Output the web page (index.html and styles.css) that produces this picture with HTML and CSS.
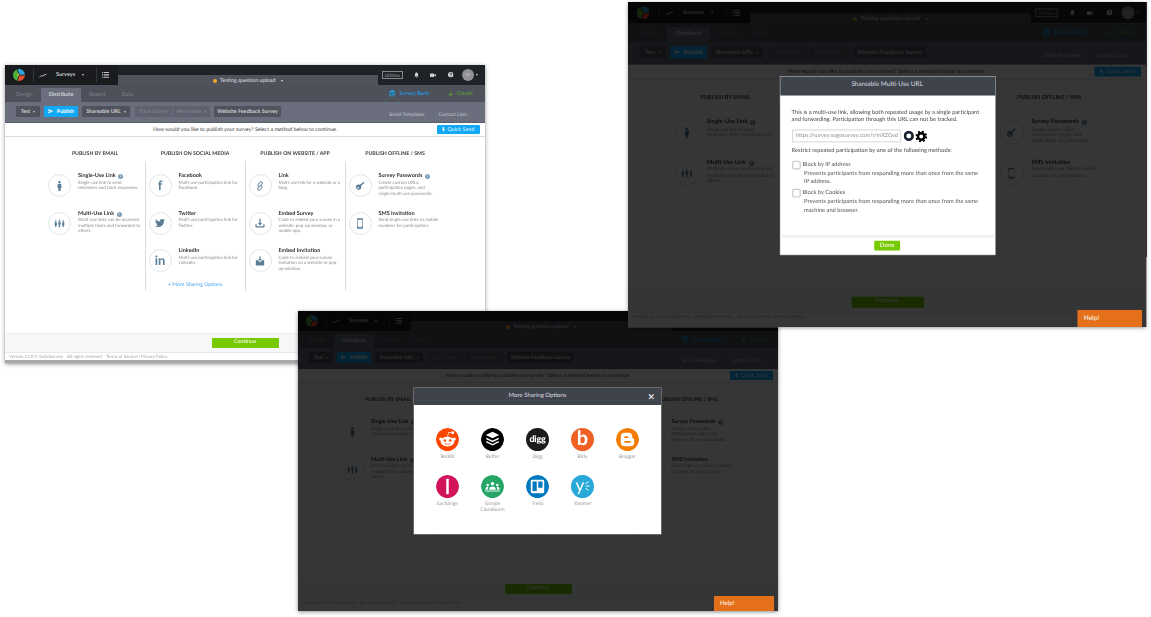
FILE: index.html
```html
<!DOCTYPE html>
<html lang="en">
<head>
<meta charset="utf-8">
<title>SoGoSurvey distribution screens</title>
<link rel="stylesheet" href="styles.css">
</head>
<body>
<svg class="sprite" xmlns="http://www.w3.org/2000/svg">
  <symbol id="i-logo" viewBox="0 0 24 24"><path fill="#2ea4d8" d="M9 .4A12 12 0 0 1 24 11.5H13z"/><path fill="#e8502f" d="M24 13A12 12 0 0 1 9.500 23.700L13 13z"/><path fill="#4fae3c" d="M7.500 1A12 12 0 0 0 8 23.300L11.500 12z"/><path fill="#f4c531" d="M9.500 7l2.500 5-2.800 4.500z"/></symbol>
  <symbol id="i-trend" viewBox="0 0 24 16"><path fill="none" stroke="currentColor" stroke-width="2.200" d="M1 14l6-7 5 4 5-7 2 3 4-5"/></symbol>
  <symbol id="i-list" viewBox="0 0 16 14"><path fill="currentColor" d="M0 0h2.500v2.500H0zM4 0h12v2.500H4zM0 5.500h2.500V8H0zM4 5.500h12V8H4zM0 11h2.500v2.500H0zM4 11h12v2.500H4z"/></symbol>
  <symbol id="i-bell" viewBox="0 0 16 18"><path fill="currentColor" d="M8 0a1.500 1.500 0 0 1 1.500 1.700C12 2.400 13 4.500 13 7v4l2 3H1l2-3V7c0-2.500 1-4.600 3.500-5.300A1.500 1.500 0 0 1 8 0zM6 15h4a2 2 0 0 1-4 0z"/></symbol>
  <symbol id="i-video" viewBox="0 0 20 14"><path fill="currentColor" d="M0 2.500A1.500 1.500 0 0 1 1.500 1h11A1.500 1.500 0 0 1 14 2.500v9a1.500 1.500 0 0 1-1.500 1.500h-11A1.500 1.500 0 0 1 0 11.500zM15 5.500l5-3v9l-5-3z"/></symbol>
  <symbol id="i-help" viewBox="0 0 16 16"><path fill="currentColor" fill-rule="evenodd" d="M8 0a8 8 0 1 1 0 16A8 8 0 0 1 8 0zM7 11v2h2v-2zM8 3C6 3 5 4.200 5 6h2c0-.7.300-1 1-1s1 .3 1 .9c0 1.100-2 1.300-2 3.600h2c0-1.700 2-2 2-3.800C11 4.200 9.800 3 8 3z"/></symbol>
  <symbol id="i-bank" viewBox="0 0 20 20"><path fill="currentColor" d="M10 0l10 5v2H0V5zM2 8.500h3v7H2zM8.500 8.500h3v7h-3zM15 8.500h3v7h-3zM0 17h20v3H0z"/></symbol>
  <symbol id="i-plane" viewBox="0 0 20 16"><path fill="currentColor" d="M0 0l20 8-20 8 3-7h9V7H3z"/></symbol>
  <symbol id="i-bolt" viewBox="0 0 10 16"><path fill="currentColor" d="M3 0h4v7h3l-5 9-2-6H1z"/></symbol>
  <symbol id="i-person" viewBox="0 0 12 24"><path fill="currentColor" d="M6 0a3 3 0 1 1 0 6 3 3 0 0 1 0-6zM2 7h8l1 9H9l-.5 8h-5L3 16H1z"/></symbol>
  <symbol id="i-people" viewBox="0 0 28 20"><path fill="currentColor" d="M4.500 2a2 2 0 1 1 0 4 2 2 0 0 1 0-4zM2 7h5l.8 6H6.500L6 19H3l-.500-6H1.200zM14 0a2 2 0 1 1 0 4 2 2 0 0 1 0-4zM11.500 5h5l.8 7H16l-.5 8h-3l-.5-8h-1.300zM23.500 2a2 2 0 1 1 0 4 2 2 0 0 1 0-4zM21 7h5l.8 6h-1.300L25 19h-3l-.500-6h-1.300z"/></symbol>
  <symbol id="i-twitter" viewBox="0 0 24 24"><path fill="currentColor" d="M23.953 4.570a10 10 0 0 1-2.825.775 4.958 4.958 0 0 0 2.163-2.723c-.951.555-2.005.959-3.127 1.184a4.920 4.920 0 0 0-8.384 4.482C7.690 8.095 4.067 6.130 1.640 3.162a4.822 4.822 0 0 0-.666 2.475c0 1.710.870 3.213 2.188 4.096a4.904 4.904 0 0 1-2.228-.616v.060a4.923 4.923 0 0 0 3.946 4.827 4.996 4.996 0 0 1-2.212.085 4.936 4.936 0 0 0 4.604 3.417 9.867 9.867 0 0 1-6.102 2.105c-.390 0-.779-.023-1.170-.067a13.995 13.995 0 0 0 7.557 2.209c9.053 0 13.998-7.496 13.998-13.985 0-.210 0-.420-.015-.630A9.935 9.935 0 0 0 24 4.590z"/></symbol>
  <symbol id="i-link" viewBox="0 0 24 24"><g fill="none" stroke="currentColor" stroke-width="2.200"><rect x="9" y="1" width="7" height="13" rx="3.500" transform="rotate(40 12.500 7.500)"/><rect x="8" y="10" width="7" height="13" rx="3.500" transform="rotate(40 11.500 16.500)"/></g></symbol>
  <symbol id="i-download" viewBox="0 0 24 24"><path fill="currentColor" d="M10.500 2h3v10h4L12 18l-5.500-6h4zM1 15h3v4c0 .6.400 1 1 1h14c.6 0 1-.4 1-1v-4h3v5c0 1.700-1.300 3-3 3H4c-1.700 0-3-1.300-3-3z"/></symbol>
  <symbol id="i-invite" viewBox="0 0 24 24"><path fill="currentColor" d="M10.500 1h3v6h3L12 12 7.500 7h3zM2 10h5l5 5 5-5h5v13H2z"/></symbol>
  <symbol id="i-key" viewBox="0 0 24 24"><path fill="currentColor" fill-rule="evenodd" d="M21 2l1.500 2-8 8a6.500 6.500 0 1 1-3-3zM7.500 14.500a2 2 0 1 0 0 4 2 2 0 0 0 0-4z"/></symbol>
  <symbol id="i-phone" viewBox="0 0 14 24"><path fill="currentColor" fill-rule="evenodd" d="M2 0h10a2 2 0 0 1 2 2v20a2 2 0 0 1-2 2H2a2 2 0 0 1-2-2V2a2 2 0 0 1 2-2zM1.500 3.500v16h11v-16zM6 21v1.500h2V21z"/></symbol>
  <symbol id="i-reddit" viewBox="0 0 24 24"><circle cx="12" cy="12" r="12" fill="#ff4500"/><ellipse cx="12" cy="14.200" rx="7.200" ry="5" fill="#fff"/><circle cx="5" cy="11.500" r="1.700" fill="#fff"/><circle cx="19" cy="11.500" r="1.700" fill="#fff"/><circle cx="17.500" cy="5" r="1.500" fill="#fff"/><path fill="none" stroke="#fff" stroke-width=".8" d="M12 9.500l1.200-5 4 .8"/><circle cx="9.200" cy="13" r="1.300" fill="#ff4500"/><circle cx="14.800" cy="13" r="1.300" fill="#ff4500"/><path fill="none" stroke="#ff4500" stroke-width=".8" d="M9 16.200c1.800 1.200 4.200 1.200 6 0"/></symbol>
  <symbol id="i-buffer" viewBox="0 0 24 24"><circle cx="12" cy="12" r="12" fill="#000"/><path fill="#fff" d="M12 4l7 3.300-7 3.300-7-3.300z"/><path fill="none" stroke="#fff" stroke-width="1.500" d="M5.500 10.800L12 14l6.500-3.200M5.500 14.300L12 17.500l6.500-3.200"/></symbol>
  <symbol id="i-blogger" viewBox="0 0 24 24"><circle cx="12" cy="12" r="12" fill="#f57d00"/><path fill="#fff" fill-rule="evenodd" d="M9 5h4a4 4 0 0 1 4 4v1a1 1 0 0 0 1 1 1 1 0 0 1 1 1v3a4 4 0 0 1-4 4H9a4 4 0 0 1-4-4V9a4 4 0 0 1 4-4zM9.500 8.500a1 1 0 0 0 0 2h2.500a1 1 0 0 0 0-2zM9.500 13.500a1 1 0 0 0 0 2h5a1 1 0 0 0 0-2z"/></symbol>
  <symbol id="i-exchange" viewBox="0 0 24 24"><circle cx="12" cy="12" r="12" fill="#d1145a"/><rect x="10.700" y="4" width="2.600" height="16" rx=".5" fill="#fff"/></symbol>
  <symbol id="i-classroom" viewBox="0 0 24 24"><circle cx="12" cy="12" r="12" fill="#25a667"/><g fill="#fff"><circle cx="12" cy="9" r="1.800"/><circle cx="7" cy="10.500" r="1.300"/><circle cx="17" cy="10.500" r="1.300"/><path d="M8.500 15.500c0-2.300 1.500-3.500 3.500-3.500s3.500 1.200 3.500 3.500zM4.500 15.500c0-2 1-3.200 2.500-3.200l.8.300c-.5.900-.8 1.800-.9 2.900zM19.500 15.500c0-2-1-3.200-2.500-3.200l-.8.300c.5.900.8 1.800.9 2.900z"/><rect x="4.500" y="16.300" width="15" height=".9"/></g></symbol>
  <symbol id="i-trello" viewBox="0 0 24 24"><circle cx="12" cy="12" r="12" fill="#0079bf"/><rect x="5" y="5" width="14" height="14" rx="1.500" fill="#fff"/><rect x="6.800" y="6.800" width="4.400" height="10" fill="#0079bf"/><rect x="12.800" y="6.800" width="4.400" height="6.500" fill="#0079bf"/></symbol>
  <symbol id="i-sparks" viewBox="0 0 6 12"><path fill="none" stroke="#fff" stroke-width="1.200" stroke-linecap="round" d="M1 3L4 1M1.500 6H5M1 9l3 2"/></symbol>
  <symbol id="i-ring" viewBox="0 0 24 24"><circle cx="12" cy="12" r="8.500" fill="none" stroke="#15212e" stroke-width="6"/></symbol>
  <symbol id="i-gear" viewBox="0 0 24 24"><circle cx="12" cy="12" r="6.500" fill="none" stroke="#000" stroke-width="5"/><circle cx="12" cy="12" r="10" fill="none" stroke="#000" stroke-width="4" stroke-dasharray="4 3.850"/></symbol>
</svg>

<main class="desk">

  <!-- Window 1: the plain Distribute page -->
  <section class="window window--plain">
    <header class="topbar">
      <div class="topbar__left">
        <svg class="logo"><use href="#i-logo"/></svg>
        <span class="vrule"></span>
        <svg class="ico-trend"><use href="#i-trend"/></svg>
        <span class="product">Surveys</span><span class="caret caret--product"></span>
        <span class="vrule vrule--second"></span>
        <svg class="ico-list"><use href="#i-list"/></svg>
      </div>
      <div class="topbar__title"><span class="dot"></span>Testing question upload<span class="caret caret--title"></span></div>
      <div class="topbar__right">
        <span class="utilities">Utilities</span>
        <svg class="ico-bell"><use href="#i-bell"/></svg>
        <svg class="ico-video"><use href="#i-video"/></svg>
        <svg class="ico-help"><use href="#i-help"/></svg>
        <span class="avatar">JG</span><span class="caret caret--avatar"></span>
      </div>
    </header>
    <nav class="tabs">
      <a class="tab">Design</a><a class="tab tab--active">Distribute</a><a class="tab">Report</a><a class="tab">Data</a>
      <a class="tabs__bank"><svg class="ico-bank"><use href="#i-bank"/></svg>Survey Bank</a>
      <a class="tabs__create"><b>+</b>Create</a>
    </nav>
    <div class="toolbar">
      <span class="btn btn--test">Test<span class="caret"></span></span>
      <span class="btn btn--blue btn--publish"><svg class="ico-plane"><use href="#i-plane"/></svg>Publish</span>
      <span class="btn btn--share">Shareable URL<span class="caret"></span></span>
      <span class="btnpair"><span class="btn btn--off btn--track">Track Survey</span><span class="btn btn--off btn--remind">Reminders<span class="caret"></span></span></span>
      <span class="btn btn--site">Website Feedback Survey</span>
      <a class="toolbar__link toolbar__link--first">Email Templates</a><a class="toolbar__link">Contact Lists</a>
    </div>
    <div class="notice">
      <p class="notice__text">How would you like to publish your survey? Select a method below to continue.</p>
      <span class="quick"><svg class="ico-bolt"><use href="#i-bolt"/></svg>Quick Send</span>
    </div>
    <div class="methods">
      <div class="col">
        <h2 class="col__title">PUBLISH BY EMAIL</h2>
        <ul class="col__list col__list--first">
          <li class="item"><span class="badge"><svg class="ico-person"><use href="#i-person"/></svg></span><div><h3 class="item__title">Single-Use Link <i class="info">i</i></h3><p class="item__text">Single-use link to send<br>reminders and track responses.</p></div></li>
          <li class="item"><span class="badge"><svg class="ico-people"><use href="#i-people"/></svg></span><div><h3 class="item__title">Multi-Use Link <i class="info">i</i></h3><p class="item__text">Multi-use links can be accessed<br>multiple times and forwarded to<br>others.</p></div></li>
        </ul>
      </div>
      <div class="col">
        <h2 class="col__title">PUBLISH ON SOCIAL MEDIA</h2>
        <ul class="col__list">
          <li class="item"><span class="badge badge--glyph">f</span><div><h3 class="item__title">Facebook</h3><p class="item__text">Multi-use participation link for<br>Facebook.</p></div></li>
          <li class="item"><span class="badge"><svg class="ico-twitter"><use href="#i-twitter"/></svg></span><div><h3 class="item__title">Twitter</h3><p class="item__text">Multi-use participation link for<br>Twitter.</p></div></li>
          <li class="item"><span class="badge badge--glyph">in</span><div><h3 class="item__title">LinkedIn</h3><p class="item__text">Multi-use participation link for<br>LinkedIn.</p></div></li>
          <li class="col__more">+ More Sharing Options</li>
        </ul>
      </div>
      <div class="col">
        <h2 class="col__title">PUBLISH ON WEBSITE / APP</h2>
        <ul class="col__list">
          <li class="item"><span class="badge"><svg class="ico-line"><use href="#i-link"/></svg></span><div><h3 class="item__title">Link</h3><p class="item__text">Multi-use link for a website or a<br>blog.</p></div></li>
          <li class="item"><span class="badge"><svg class="ico-line"><use href="#i-download"/></svg></span><div><h3 class="item__title">Embed Survey</h3><p class="item__text">Code to embed your survey in a<br>website, pop-up window, or<br>mobile app.</p></div></li>
          <li class="item"><span class="badge"><svg class="ico-line"><use href="#i-invite"/></svg></span><div><h3 class="item__title">Embed Invitation</h3><p class="item__text">Code to embed your survey<br>invitation on a website or pop-<br>up window.</p></div></li>
        </ul>
      </div>
      <div class="col">
        <h2 class="col__title">PUBLISH OFFLINE / SMS</h2>
        <ul class="col__list">
          <li class="item"><span class="badge"><svg class="ico-line"><use href="#i-key"/></svg></span><div><h3 class="item__title">Survey Passwords <i class="info">i</i></h3><p class="item__text">Create custom URLs,<br>participation pages, and<br>single/multi-use passwords.</p></div></li>
          <li class="item"><span class="badge"><svg class="ico-phone"><use href="#i-phone"/></svg></span><div><h3 class="item__title">SMS Invitation</h3><p class="item__text">Send single-use links to mobile<br>numbers for participation.</p></div></li>
        </ul>
      </div>
    </div>
    <div class="actions"><span class="continue">Continue</span></div>
    <footer class="legal">Version 12.0 © SoGoSurvey &nbsp; &nbsp;All rights reserved &nbsp; &nbsp;Terms of Service | Privacy Policy</footer>
  </section>

  <!-- Window 3: page with the More Sharing Options dialog -->
  <section class="window window--sharing">
    <header class="topbar">
      <div class="topbar__left">
        <svg class="logo"><use href="#i-logo"/></svg>
        <span class="vrule"></span>
        <svg class="ico-trend"><use href="#i-trend"/></svg>
        <span class="product">Surveys</span><span class="caret caret--product"></span>
        <span class="vrule vrule--second"></span>
        <svg class="ico-list"><use href="#i-list"/></svg>
      </div>
      <div class="topbar__title"><span class="dot"></span>Testing question upload<span class="caret caret--title"></span></div>
      <div class="topbar__right">
        <span class="utilities">Utilities</span>
        <svg class="ico-bell"><use href="#i-bell"/></svg>
        <svg class="ico-video"><use href="#i-video"/></svg>
        <svg class="ico-help"><use href="#i-help"/></svg>
        <span class="avatar">JG</span><span class="caret caret--avatar"></span>
      </div>
    </header>
    <nav class="tabs">
      <a class="tab">Design</a><a class="tab tab--active">Distribute</a><a class="tab">Report</a><a class="tab">Data</a>
      <a class="tabs__bank"><svg class="ico-bank"><use href="#i-bank"/></svg>Survey Bank</a>
      <a class="tabs__create"><b>+</b>Create</a>
    </nav>
    <div class="toolbar">
      <span class="btn btn--test">Test<span class="caret"></span></span>
      <span class="btn btn--blue btn--publish"><svg class="ico-plane"><use href="#i-plane"/></svg>Publish</span>
      <span class="btn btn--share">Shareable URL<span class="caret"></span></span>
      <span class="btnpair"><span class="btn btn--off btn--track">Track Survey</span><span class="btn btn--off btn--remind">Reminders<span class="caret"></span></span></span>
      <span class="btn btn--site">Website Feedback Survey</span>
      <a class="toolbar__link toolbar__link--first">Email Templates</a><a class="toolbar__link">Contact Lists</a>
    </div>
    <div class="notice">
      <p class="notice__text">How would you like to publish your survey? Select a method below to continue.</p>
      <span class="quick"><svg class="ico-bolt"><use href="#i-bolt"/></svg>Quick Send</span>
    </div>
    <div class="methods">
      <div class="col">
        <h2 class="col__title">PUBLISH BY EMAIL</h2>
        <ul class="col__list col__list--first">
          <li class="item"><span class="badge"><svg class="ico-person"><use href="#i-person"/></svg></span><div><h3 class="item__title">Single-Use Link <i class="info">i</i></h3><p class="item__text">Single-use link to send<br>reminders and track responses.</p></div></li>
          <li class="item"><span class="badge"><svg class="ico-people"><use href="#i-people"/></svg></span><div><h3 class="item__title">Multi-Use Link <i class="info">i</i></h3><p class="item__text">Multi-use links can be accessed<br>multiple times and forwarded to<br>others.</p></div></li>
        </ul>
      </div>
      <div class="col">
        <h2 class="col__title">PUBLISH ON SOCIAL MEDIA</h2>
        <ul class="col__list"></ul>
      </div>
      <div class="col">
        <h2 class="col__title">PUBLISH ON WEBSITE / APP</h2>
        <ul class="col__list"></ul>
      </div>
      <div class="col">
        <h2 class="col__title">PUBLISH OFFLINE / SMS</h2>
        <ul class="col__list">
          <li class="item"><span class="badge"><svg class="ico-line"><use href="#i-key"/></svg></span><div><h3 class="item__title">Survey Passwords <i class="info">i</i></h3><p class="item__text">Create custom URLs,<br>participation pages, and<br>single/multi-use passwords.</p></div></li>
          <li class="item"><span class="badge"><svg class="ico-phone"><use href="#i-phone"/></svg></span><div><h3 class="item__title">SMS Invitation</h3><p class="item__text">Send single-use links to mobile<br>numbers for participation.</p></div></li>
        </ul>
      </div>
    </div>
    <div class="actions"><span class="continue">Continue</span></div>
    <footer class="legal">Version 12.0 © SoGoSurvey &nbsp; &nbsp;All rights reserved &nbsp; &nbsp;Terms of Service | Privacy Policy</footer>
    <div class="overlay overlay--sharing">
      <div class="modal modal--sharing">
        <div class="modal__head">More Sharing Options<span class="modal__close">✕</span></div>
        <div class="share-grid">
          <div class="share"><svg class="share__icon"><use href="#i-reddit"/></svg>Reddit</div>
          <div class="share"><svg class="share__icon"><use href="#i-buffer"/></svg>Buffer</div>
          <div class="share"><span class="share__icon share__icon--digg">digg</span>Digg</div>
          <div class="share"><span class="share__icon share__icon--bitly">b</span>Bitly</div>
          <div class="share"><svg class="share__icon"><use href="#i-blogger"/></svg>Blogger</div>
          <div class="share"><svg class="share__icon"><use href="#i-exchange"/></svg>Exchange</div>
          <div class="share"><svg class="share__icon"><use href="#i-classroom"/></svg>Google<br>ClassRoom</div>
          <div class="share"><svg class="share__icon"><use href="#i-trello"/></svg>Trello</div>
          <div class="share"><span class="share__icon share__icon--yammer">y<svg class="sparks"><use href="#i-sparks"/></svg></span>Yammer</div>
        </div>
      </div>
    </div>
    <span class="help">Help!</span>
  </section>

  <!-- Window 2: page with the Shareable Multi-Use URL dialog -->
  <section class="window window--url">
    <header class="topbar">
      <div class="topbar__left">
        <svg class="logo"><use href="#i-logo"/></svg>
        <span class="vrule"></span>
        <svg class="ico-trend"><use href="#i-trend"/></svg>
        <span class="product">Surveys</span><span class="caret caret--product"></span>
        <span class="vrule vrule--second"></span>
        <svg class="ico-list"><use href="#i-list"/></svg>
      </div>
      <div class="topbar__title"><span class="dot dot--green"></span>Testing question upload<span class="caret caret--title"></span></div>
      <div class="topbar__right">
        <span class="utilities">Utilities</span>
        <svg class="ico-bell"><use href="#i-bell"/></svg>
        <svg class="ico-video"><use href="#i-video"/></svg>
        <svg class="ico-help"><use href="#i-help"/></svg>
        <span class="avatar">JG</span><span class="caret caret--avatar"></span>
      </div>
    </header>
    <nav class="tabs">
      <a class="tab">Design</a><a class="tab tab--active">Distribute</a><a class="tab">Report</a><a class="tab">Data</a>
      <a class="tabs__bank"><svg class="ico-bank"><use href="#i-bank"/></svg>Survey Bank</a>
      <a class="tabs__create"><b>+</b>Create</a>
    </nav>
    <div class="toolbar">
      <span class="btn btn--test">Test<span class="caret"></span></span>
      <span class="btn btn--blue btn--publish"><svg class="ico-plane"><use href="#i-plane"/></svg>Publish</span>
      <span class="btn btn--share">Shareable URL<span class="caret"></span></span>
      <span class="btnpair"><span class="btn btn--off btn--track">Track Survey</span><span class="btn btn--off btn--remind">Reminders<span class="caret"></span></span></span>
      <span class="btn btn--site">Website Feedback Survey</span>
      <a class="toolbar__link toolbar__link--first">Email Templates</a><a class="toolbar__link">Contact Lists</a>
    </div>
    <div class="notice">
      <p class="notice__text">How would you like to publish your survey? Select a method below to continue.</p>
      <span class="quick"><svg class="ico-bolt"><use href="#i-bolt"/></svg>Quick Send</span>
    </div>
    <div class="methods">
      <div class="col">
        <h2 class="col__title">PUBLISH BY EMAIL</h2>
        <ul class="col__list col__list--first">
          <li class="item"><span class="badge"><svg class="ico-person"><use href="#i-person"/></svg></span><div><h3 class="item__title">Single-Use Link <i class="info">i</i></h3><p class="item__text">Single-use link to send<br>reminders and track responses.</p></div></li>
          <li class="item"><span class="badge"><svg class="ico-people"><use href="#i-people"/></svg></span><div><h3 class="item__title">Multi-Use Link <i class="info">i</i></h3><p class="item__text">Multi-use links can be accessed<br>multiple times and forwarded to<br>others.</p></div></li>
        </ul>
      </div>
      <div class="col">
        <h2 class="col__title">PUBLISH ON SOCIAL MEDIA</h2>
        <ul class="col__list"></ul>
      </div>
      <div class="col">
        <h2 class="col__title">PUBLISH ON WEBSITE / APP</h2>
        <ul class="col__list"></ul>
      </div>
      <div class="col">
        <h2 class="col__title">PUBLISH OFFLINE / SMS</h2>
        <ul class="col__list">
          <li class="item"><span class="badge"><svg class="ico-line"><use href="#i-key"/></svg></span><div><h3 class="item__title">Survey Passwords <i class="info">i</i></h3><p class="item__text">Create custom URLs,<br>participation pages, and<br>single/multi-use passwords.</p></div></li>
          <li class="item"><span class="badge"><svg class="ico-phone"><use href="#i-phone"/></svg></span><div><h3 class="item__title">SMS Invitation</h3><p class="item__text">Send single-use links to mobile<br>numbers for participation.</p></div></li>
        </ul>
      </div>
    </div>
    <div class="actions"><span class="continue">Continue</span></div>
    <footer class="legal">Version 12.0 © SoGoSurvey &nbsp; &nbsp;All rights reserved &nbsp; &nbsp;Terms of Service | Privacy Policy</footer>
    <div class="overlay overlay--url">
      <div class="modal modal--url">
        <div class="modal__head">Shareable Multi-Use URL</div>
        <div class="modal__body">
          <p class="modal__lead">This is a multi-use link, allowing both repeated usage by a single participant and forwarding. Participation through this URL can not be tracked.</p>
          <div class="urlrow">
            <span class="urlrow__field">https://survey.sogosurvey.com/r/mXZGvd</span>
            <svg class="urlrow__ring"><use href="#i-ring"/></svg>
            <svg class="urlrow__gear"><use href="#i-gear"/></svg>
          </div>
          <p class="modal__restrict">Restrict repeated participation by one of the following methods:</p>
          <div class="check"><span class="check__box"></span><span>Block by IP address</span></div>
          <p class="check__text">Prevents participants from responding more than once from the same IP address.</p>
          <div class="check"><span class="check__box"></span><span>Block by Cookies</span></div>
          <p class="check__text">Prevents participants from responding more than once from the same machine and browser.</p>
        </div>
        <div class="modal__foot"><span class="done">Done</span></div>
      </div>
    </div>
    <span class="help">Help!</span>
  </section>

</main>
</body>
</html>
```

FILE: styles.css
```css
* { box-sizing: border-box; }

html, body { margin: 0; height: 100%; background: #fff; }

body {
  font-family: Lato, "Open Sans", "Liberation Sans", sans-serif;
  color: #333;
  overflow: hidden;
  text-rendering: geometricPrecision;
}

.sprite { position: absolute; width: 0; height: 0; }

h2, h3, p, ul { margin: 0; padding: 0; }
ul { list-style: none; }

.desk { position: relative; width: 1151px; height: 617px; }

/* Windows sit on a free canvas */
.window {
  position: absolute;
  width: 480px;
  display: flex;
  flex-direction: column;
  overflow: hidden;
  background: #fff;
  box-shadow: 0 1px 4px rgba(0, 0, 0, .45);
  filter: blur(.25px);
}
.window--plain { left: 5px; top: 65px; height: 298px; border-bottom: 3px solid #a9a9a9; }
.window--sharing { left: 298px; top: 311px; height: 300px; }
.window--url { left: 628px; top: 2px; height: 301px; transform: scale(1.08); transform-origin: 0 0; }

/* Top bar */
.topbar { flex: none; display: flex; height: 20px; background: #1f2227; color: #d8dade; }
.topbar__left { flex: none; display: flex; align-items: center; width: 113px; padding-left: 8px; background: #191b1f; }
.logo { width: 12px; height: 12px; flex: none; }
.vrule { width: 1px; height: 14px; margin: 0 5px 0 8px; background: #33363c; flex: none; }
.vrule--second { margin: 0 5px 0 0; }
.ico-trend { width: 8px; height: 5px; color: #e6e8ea; margin-right: 9px; flex: none; }
.product { font-size: 5.500px; font-weight: 700; color: #c6c8cd; }
.caret {
  display: inline-block;
  width: 0; height: 0;
  margin-left: 4px;
  vertical-align: middle;
  border: 1.500px solid transparent;
  border-top: 2px solid currentColor;
  border-bottom: 0;
}
.caret--product { margin: 0 12px 0 7px; }
.ico-list { width: 7px; height: 6px; color: #c6c8cd; }

.topbar__title {
  flex: 1;
  display: flex;
  align-items: center;
  justify-content: center;
  height: 10px;
  margin-top: 10px;
  background: #50535c;
  font-size: 5.300px;
  color: #dfe0e3;
  padding-top: 2px;
}
.dot { width: 4.500px; height: 4.500px; margin-right: 3px; border-radius: 50%; background: #f5a623; }
.dot--green { background: #7cb82f; }
.caret--title { margin-left: 6px; }

.topbar__right { flex: none; display: flex; align-items: center; width: 107px; padding-left: 4px; color: #cfd1d5; }
.utilities { width: 21px; height: 8px; border: .5px solid #85888e; font-size: 4.600px; line-height: 7px; text-align: center; color: #a6a8ad; }
.ico-bell { width: 5px; height: 6px; margin-left: 11px; }
.ico-video { width: 6px; height: 4.500px; margin-left: 11px; }
.ico-help { width: 5.500px; height: 5.500px; margin-left: 12px; }
.avatar { width: 12px; height: 12px; margin-left: 8px; border-radius: 50%; background: #8f9196; color: #d6d6d6; font-size: 4.200px; line-height: 12px; text-align: center; }
.caret--avatar { margin-left: 2px; }

/* Tabs */
.tabs { flex: none; display: flex; align-items: flex-end; height: 17px; padding-left: 3px; background: #4e515a; }
.tab { height: 14px; padding: 0 8px; font-size: 5.500px; line-height: 14px; color: #7f828d; }
.tab--active { background: #6a6e7d; color: #d5d7dc; font-weight: 700; }
.tabs__bank { display: flex; align-items: center; height: 17px; margin-left: auto; font-size: 5.500px; color: #12a8f5; }
.ico-bank { width: 6.500px; height: 6.500px; margin-right: 4px; }
.tabs__create { display: flex; align-items: center; height: 17px; margin: 0 12px 0 19px; font-size: 5.500px; color: #5da52d; }
.tabs__create b { margin-right: 4px; font-size: 8px; font-weight: 700; }

/* Toolbar */
.toolbar { flex: none; display: flex; gap: 4px; height: 21px; padding: 4px 18px 0 11px; background: #6a6e7d; border-bottom: 1px solid #5c606d; }
.btn { display: flex; align-items: center; justify-content: center; height: 11px; border-radius: 1px; background: #50535c; font-size: 5.300px; font-weight: 700; color: #ccced3; }
.btn .caret { margin-left: 3px; }
.btn--test { width: 24px; }
.btn--publish { width: 34px; }
.btn--share { width: 48px; }
.btn--track { width: 38px; }
.btn--remind { width: 38px; }
.btn--site { width: 67px; }
.btn--blue { background: #12a8f5; color: #fff; }
.ico-plane { width: 5.500px; height: 4.500px; margin-right: 3px; }
.btnpair { display: flex; }
.btn--off { background: #5e616e; color: #858894; border-left: .5px solid #6a6e7d; font-weight: 400; }
.toolbar__link { align-self: flex-end; margin: 0 0 4px 10px; font-size: 5px; color: #c4c6cd; white-space: nowrap; }
.toolbar__link--first { margin-left: auto; }

/* Notice strip */
.notice { flex: none; display: grid; grid-template-columns: 1fr auto 1fr; align-items: center; height: 14px; border-bottom: 1px solid #d5dde2; background: #fff; }
.notice__text { grid-column: 2; font-size: 5.300px; color: #444; white-space: nowrap; }
.quick { grid-column: 3; justify-self: end; display: flex; align-items: center; justify-content: center; width: 43px; height: 9px; margin-right: 5px; border-radius: 1px; background: #12a8f5; font-size: 5.400px; color: #dff4ff; }
.ico-bolt { width: 3px; height: 5px; margin-right: 2px; }

/* Publishing methods */
.methods { flex: none; display: grid; grid-template-columns: repeat(4, 100px); justify-content: center; height: 196px; padding-top: 12px; }
.col { display: flex; flex-direction: column; height: 142px; }
.col__title { height: 10px; margin-bottom: 2px; font-size: 5.200px; font-weight: 700; line-height: 10px; text-align: center; color: #3a3a3a; white-space: nowrap; }
.col__list { flex: 1; display: flex; flex-direction: column; gap: 14.500px; padding: 13px 0 0 2.500px; border-left: 1px solid #d5dde2; }
.col__list--first { padding-left: 3px; border-left: 0; }
.item { display: flex; gap: 7px; height: 23px; }
.badge { flex: none; display: flex; align-items: center; justify-content: center; width: 23px; height: 23px; border: .5px solid #dfe5e8; border-radius: 50%; color: #5b7d96; background: #fff; }
.badge--glyph { font-size: 13px; font-weight: 700; line-height: 1; }
.ico-person { width: 5px; height: 10px; }
.ico-people { width: 11px; height: 9px; }
.ico-twitter { width: 10px; height: 10px; }
.ico-line { width: 10px; height: 10px; }
.ico-phone { width: 6px; height: 11px; }
.item__title { margin-top: -1px; font-size: 5.500px; font-weight: 700; line-height: 6px; color: #333; white-space: nowrap; }
.item__text { margin-top: .5px; font-size: 4.450px; line-height: 5.700px; color: #8d8d8d; white-space: nowrap; }
.info { display: inline-block; width: 5px; height: 5px; margin-left: 1px; border-radius: 50%; background: #7d9fb6; color: #fff; font-size: 3.500px; font-style: normal; line-height: 5px; text-align: center; vertical-align: 0; }
.col__more { margin-top: -4.500px; font-size: 5.200px; line-height: 6px; text-align: center; color: #4aa3ec; padding-right: 3px; }

/* Footer */
.actions { flex: none; display: flex; align-items: center; justify-content: center; height: 19px; background: #f6f7f9; border-top: .5px solid #eceef1; }
.continue { display: block; width: 67px; height: 9.500px; border-radius: 1px; background: #77c900; font-size: 5.400px; font-weight: 700; line-height: 9.500px; text-align: center; color: #eaf7d4; }
.legal { flex: 1; padding: .5px 0 0 4px; background: #fff; border-top: .5px solid #e6e8eb; font-size: 4.400px; line-height: 6px; color: #a5a5a5; white-space: nowrap; }

/* Overlay and dialogs */
.overlay { position: absolute; inset: 0; display: flex; justify-content: center; align-items: flex-start; background: rgba(0, 0, 0, .79); }
.overlay--sharing { padding-top: 77px; }
.overlay--url { padding-top: 68.500px; }
.modal { display: flex; flex-direction: column; background: #fff; box-shadow: 0 0 0 .5px #9a9a9a; }
.modal--sharing { width: 247px; height: 146px; margin-right: 1px; }
.modal--url { width: 199px; height: 165px; }
.modal__head { position: relative; flex: none; height: 17px; background: #3f434c; font-size: 6px; line-height: 16px; text-align: center; color: #dcdde0; }
.modal__close { position: absolute; top: 0; right: 6px; font-size: 9px; line-height: 17px; color: #fff; }

.share-grid { display: grid; grid-template-columns: repeat(5, 45px); grid-auto-rows: 47px; padding: 22.500px 11px 0; }
.share { display: flex; flex-direction: column; align-items: center; font-size: 5px; line-height: 6px; text-align: center; color: #999; }
.share__icon { display: flex; align-items: center; justify-content: center; width: 23px; height: 23px; margin-bottom: 3px; border-radius: 50%; flex: none; }
.share__icon--digg { background: #1d1b1a; color: #fff; font-size: 9px; font-weight: 900; line-height: 1; letter-spacing: -.2px; padding-bottom: 2px; }
.share__icon--bitly { background: #ee6123; color: #fff; font-size: 20px; font-weight: 700; line-height: 1; padding-bottom: 2px; }
.share__icon--yammer { background: #28a9d8; color: #fff; font-size: 17px; line-height: 1; padding: 0 0 3px 1px; }
.sparks { width: 5px; height: 10px; margin: 2px 0 0 1px; }

.modal__body { flex: 1; padding: 14px 11px 0; font-size: 5.300px; color: #555; }
.modal__lead { line-height: 6px; color: #444; }
.urlrow { display: flex; align-items: center; margin-top: 6.500px; }
.urlrow__field { width: 101px; height: 12px; padding-left: 3px; border: .5px solid #d9d9d9; font-size: 5.200px; line-height: 11px; color: #8f8f8f; white-space: nowrap; overflow: hidden; }
.urlrow__ring { width: 10px; height: 10px; margin-left: 2px; }
.urlrow__gear { width: 11px; height: 11px; margin-left: 1.500px; }
.modal__restrict { margin: 5px 0 6px; line-height: 6px; color: #444; }
.check { display: flex; align-items: center; gap: 2px; height: 8px; color: #555; }
.check__box { width: 8px; height: 8px; border: .5px solid #c9c9c9; border-radius: 1.500px; background: #fff; box-shadow: inset 0 0 1px #ddd; }
.check__text { margin: -.5px 0 2px; padding-left: 11.500px; line-height: 8.300px; color: #555; }
.modal__foot { flex: none; display: flex; justify-content: center; align-items: center; height: 18px; border-top: 2px solid #eceded; }
.done { width: 24px; height: 9.500px; border-radius: 1px; background: #77c900; font-size: 5.600px; font-weight: 700; line-height: 9.500px; text-align: center; color: #eaf7d4; }

.help { position: absolute; right: 4px; bottom: 0; width: 60px; height: 15px; padding-left: 6px; border-radius: 1px 1px 0 0; background: #e5701b; font-size: 6px; font-weight: 700; line-height: 15px; color: #f7e3d2; }
.window--url .help { height: 16px; }
```
